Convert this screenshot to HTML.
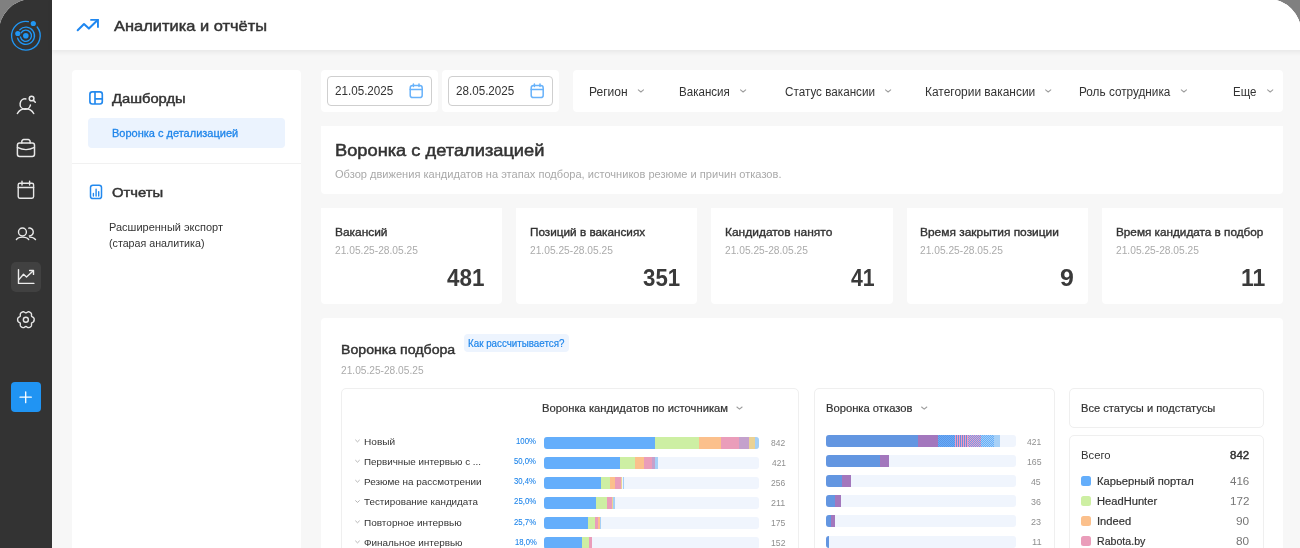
<!DOCTYPE html>
<html lang="ru">
<head>
<meta charset="utf-8">
<title>Аналитика и отчёты</title>
<style>
html,body{margin:0;padding:0;}
body{width:1300px;height:548px;overflow:hidden;background:#808080;font-family:"Liberation Sans",sans-serif;position:relative;}
#clip{position:absolute;left:-1px;top:-1px;width:1302px;height:600px;border-radius:33px 33px 0 0;overflow:hidden;background:#f7f7f7;}
#app{position:absolute;left:1px;top:1px;width:1300px;height:548px;background:#f7f7f7;}
.abs{position:absolute;}
.t{position:absolute;white-space:nowrap;line-height:1;transform-origin:0 0;}
#side{position:absolute;left:0;top:-2px;width:52px;height:560px;background:#333333;}
#hdr{position:absolute;left:52px;top:-2px;width:1260px;height:52px;background:#fff;box-shadow:0 2px 5px rgba(0,0,0,0.07);}
.card{position:absolute;background:#fff;border-radius:4px;}
.box{position:absolute;background:#fff;border:1px solid #efefef;border-radius:5px;box-sizing:border-box;}
.bar{position:absolute;height:12px;border-radius:3px;overflow:hidden;background:#f0f5fd;}
.bar i{position:absolute;top:0;height:12px;display:block;}
.sw{position:absolute;width:10px;height:10px;border-radius:2.5px;}
svg{position:absolute;overflow:visible;}
#txt{position:absolute;left:0;top:0;width:1300px;height:548px;will-change:transform;}
</style>
</head>
<body>
<div id="clip">
<div id="app">
<div id="side"></div>
<div id="hdr"></div>
<!-- sidebar icons -->
<svg id="logo" style="left:0;top:0" width="52" height="60" viewBox="0 0 52 60" fill="none" stroke="#2196f3" stroke-width="1.35" stroke-linecap="round">
  <path d="M37.18 26.97 A14.3 14.3 0 1 1 28.41 21.67"/>
  <path d="M19.82 29.67 A8.6 8.6 0 1 1 17.63 38.12"/>
  <path d="M21.15 32.78 A5.6 5.6 0 1 1 20.42 36.91"/>
  <circle cx="33.3" cy="23.5" r="2.6" fill="#2196f3" stroke="none"/>
  <circle cx="17.8" cy="33.5" r="2.6" fill="#2196f3" stroke="none"/>
  <circle cx="25.8" cy="35.8" r="2.8" fill="#2196f3" stroke="none"/>
</svg>
<svg style="left:0;top:85px" width="52" height="40" viewBox="0 85 52 40" fill="none" stroke="#e8e8e8" stroke-width="1.5" stroke-linecap="round" stroke-linejoin="round">
  <path d="M25.9 98.9 A5.2 5.2 0 1 0 30.4 105.1"/>
  <circle cx="31.6" cy="98.5" r="2.35" stroke-width="1.5"/>
  <path d="M33.4 100.4 L35.3 102.3" stroke-width="1.5"/>
  <path d="M17.4 113.5 A9.4 9.4 0 0 1 33.7 113.5"/>
</svg>
<svg style="left:0;top:128px" width="52" height="40" viewBox="0 128 52 40" fill="none" stroke="#e8e8e8" stroke-width="1.5" stroke-linecap="round" stroke-linejoin="round">
  <rect x="17.4" y="143.1" width="17.1" height="13.3" rx="2.2"/>
  <path d="M21.8 143 V141.5 A1.9 1.9 0 0 1 23.7 139.6 H28.2 A1.9 1.9 0 0 1 30.1 141.5 V143"/>
  <path d="M17.4 147.4 Q26 151.8 34.5 147.4" stroke-width="1.3"/>
</svg>
<svg style="left:0;top:170px" width="52" height="40" viewBox="0 170 52 40" fill="none" stroke="#e8e8e8" stroke-width="1.4" stroke-linecap="round" stroke-linejoin="round">
  <rect x="18.2" y="183.2" width="15.4" height="15" rx="1.6"/>
  <path d="M18.2 187.5 H33.6 M22 181.3 V185 M29.6 181.3 V185"/>
</svg>
<svg style="left:0;top:214px" width="52" height="40" viewBox="0 214 52 40" fill="none" stroke="#e8e8e8" stroke-width="1.4" stroke-linecap="round" stroke-linejoin="round">
  <circle cx="22.45" cy="232" r="3.95"/>
  <path d="M16.4 239.6 C18.4 236.3 26.6 236.3 28.7 239.6"/>
  <path d="M28.7 228.1 A3.95 3.95 0 1 1 29.3 235.95"/>
  <path d="M29.6 237.1 C32 237.1 34.2 237.8 35.5 239.6"/>
</svg>
<div class="abs" style="left:11px;top:262px;width:30px;height:30px;border-radius:5px;background:#414141"></div>
<svg style="left:0;top:256px" width="52" height="40" viewBox="0 256 52 40" fill="none" stroke="#ededed" stroke-width="1.4" stroke-linecap="round" stroke-linejoin="round">
  <path d="M18.5 269.6 V283.4 H33.9"/>
  <path d="M18.9 279.6 L23.5 274.2 L26.5 276.9 L33.3 270.7"/>
  <path d="M29.6 270.5 H33.5 V274.4"/>
</svg>
<svg style="left:0;top:298px" width="52" height="40" viewBox="0 298 52 40" fill="none" stroke="#e6e6e6" stroke-width="1.4" stroke-linecap="round" stroke-linejoin="round">
  <circle cx="25.85" cy="319.7" r="2.5"/>
  <path d="M34.18 319.70 L34.17 319.33 L34.14 318.96 L34.08 318.59 L33.96 318.24 L33.77 317.90 L33.50 317.60 L33.17 317.34 L32.79 317.12 L32.41 316.92 L32.07 316.74 L31.79 316.54 L31.60 316.31 L31.50 316.03 L31.47 315.68 L31.49 315.28 L31.52 314.84 L31.52 314.40 L31.46 313.97 L31.35 313.58 L31.16 313.24 L30.92 312.96 L30.65 312.72 L30.35 312.51 L30.04 312.31 L29.72 312.13 L29.40 311.97 L29.06 311.85 L28.70 311.78 L28.32 311.78 L27.94 311.87 L27.55 312.04 L27.17 312.26 L26.82 312.50 L26.49 312.72 L26.19 312.87 L25.90 312.92 L25.61 312.87 L25.31 312.72 L24.98 312.50 L24.63 312.26 L24.25 312.04 L23.86 311.87 L23.48 311.78 L23.10 311.78 L22.74 311.85 L22.40 311.97 L22.08 312.13 L21.76 312.31 L21.45 312.51 L21.15 312.72 L20.88 312.96 L20.64 313.24 L20.45 313.58 L20.34 313.97 L20.28 314.40 L20.28 314.84 L20.31 315.28 L20.33 315.68 L20.30 316.03 L20.20 316.31 L20.01 316.54 L19.73 316.74 L19.39 316.92 L19.01 317.12 L18.63 317.34 L18.30 317.60 L18.03 317.90 L17.84 318.24 L17.72 318.59 L17.66 318.96 L17.63 319.33 L17.62 319.70 L17.63 320.07 L17.66 320.44 L17.72 320.81 L17.84 321.16 L18.03 321.50 L18.30 321.80 L18.63 322.06 L19.01 322.28 L19.39 322.48 L19.73 322.66 L20.01 322.86 L20.20 323.09 L20.30 323.37 L20.33 323.72 L20.31 324.12 L20.28 324.56 L20.28 325.00 L20.34 325.43 L20.45 325.82 L20.64 326.16 L20.88 326.44 L21.15 326.68 L21.45 326.89 L21.76 327.09 L22.08 327.27 L22.40 327.43 L22.74 327.55 L23.10 327.62 L23.48 327.62 L23.86 327.53 L24.25 327.36 L24.63 327.14 L24.98 326.90 L25.31 326.68 L25.61 326.53 L25.90 326.48 L26.19 326.53 L26.49 326.68 L26.82 326.90 L27.17 327.14 L27.55 327.36 L27.94 327.53 L28.32 327.62 L28.70 327.62 L29.06 327.55 L29.40 327.43 L29.72 327.27 L30.04 327.09 L30.35 326.89 L30.65 326.68 L30.92 326.44 L31.16 326.16 L31.35 325.82 L31.46 325.43 L31.52 325.00 L31.52 324.56 L31.49 324.12 L31.47 323.72 L31.50 323.37 L31.60 323.09 L31.79 322.86 L32.07 322.66 L32.41 322.48 L32.79 322.28 L33.17 322.06 L33.50 321.80 L33.77 321.50 L33.96 321.16 L34.08 320.81 L34.14 320.44 L34.17 320.07 Z"/>
</svg>
<div class="abs" style="left:11px;top:382px;width:29.7px;height:30.2px;border-radius:4px;background:#2094f3"></div>
<svg style="left:0;top:382px" width="52" height="30" viewBox="0 382 52 30" fill="none" stroke="#fff" stroke-width="1.3" stroke-linecap="round">
  <path d="M20 397.2 H31.3 M25.7 391.8 V402.7"/>
</svg>
<!-- header icon -->
<svg style="left:70px;top:10px" width="40" height="30" viewBox="70 10 40 30" fill="none" stroke="#1f87f0" stroke-width="2.05" stroke-linejoin="round">
  <path d="M77.7 30.2 L84 24 L88.9 28.6 L97.4 20.3" stroke-linecap="round"/>
  <path d="M90.3 19.9 H97.95 V27.8" stroke-linejoin="miter" stroke-linecap="butt" stroke-width="1.9"/>
</svg>

<!-- left panel -->
<div class="card" style="left:72px;top:70px;width:229px;height:500px;"></div>
<svg style="left:88px;top:90px" width="18" height="18" viewBox="88 90 18 18" fill="none" stroke="#2389ee" stroke-width="1.65" stroke-linejoin="round">
  <rect x="89.9" y="91.9" width="12.4" height="12.1" rx="2.4"/>
  <path d="M95 91.9 V104 M95 98.8 H102.3"/>
</svg>
<div class="abs" style="left:88px;top:118px;width:197px;height:30px;border-radius:4px;background:#ebf3fe"></div>
<div class="abs" style="left:72px;top:163px;width:229px;height:1px;background:#f1f1f1"></div>
<svg style="left:88px;top:184px" width="18" height="18" viewBox="88 184 18 18" fill="none" stroke="#2389ee" stroke-width="1.4" stroke-linecap="round" stroke-linejoin="round">
  <rect x="90.5" y="185.2" width="11" height="13.4" rx="2.4" stroke-width="1.5"/>
  <path d="M93.4 193.4 V196 M96.1 189.3 V196 M98.7 191.7 V196" stroke-width="1.4"/>
</svg>

<!-- date inputs -->
<div class="card" style="left:321px;top:70px;width:117px;height:42px;"></div>
<div class="card" style="left:442px;top:70px;width:117px;height:42px;"></div>
<div class="abs" style="left:327px;top:76px;width:105px;height:30px;box-sizing:border-box;border:1px solid #cfcfcf;border-radius:4px;"></div>
<div class="abs" style="left:448px;top:76px;width:105px;height:30px;box-sizing:border-box;border:1px solid #cfcfcf;border-radius:4px;"></div>
<svg style="left:405px;top:80px" width="22" height="22" viewBox="405 80 22 22" fill="none" stroke="#68b2fa" stroke-width="1.5" stroke-linecap="round" stroke-linejoin="round">
  <rect x="410.2" y="85.6" width="12" height="12" rx="2.4"/>
  <path d="M410.2 89.4 H422.2 M413.4 84 V86.6 M419 84 V86.6"/>
</svg>
<svg style="left:526px;top:80px" width="22" height="22" viewBox="405 80 22 22" fill="none" stroke="#68b2fa" stroke-width="1.5" stroke-linecap="round" stroke-linejoin="round">
  <rect x="410.2" y="85.6" width="12" height="12" rx="2.4"/>
  <path d="M410.2 89.4 H422.2 M413.4 84 V86.6 M419 84 V86.6"/>
</svg>
<!-- filter bar -->
<div class="card" style="left:573px;top:70px;width:710px;height:42px;"></div>

<!-- title card -->
<div class="card" style="left:321px;top:126px;width:962px;height:68px;border-radius:0 0 4px 4px;"></div>
<!-- stat cards -->
<div class="card" style="left:321px;top:208px;width:181.2px;height:96px;border-radius:0 0 4px 4px;"></div>
<div class="card" style="left:516.2px;top:208px;width:181.2px;height:96px;border-radius:0 0 4px 4px;"></div>
<div class="card" style="left:711.4px;top:208px;width:181.2px;height:96px;border-radius:0 0 4px 4px;"></div>
<div class="card" style="left:906.6px;top:208px;width:181.2px;height:96px;border-radius:0 0 4px 4px;"></div>
<div class="card" style="left:1101.8px;top:208px;width:181.2px;height:96px;border-radius:0 0 4px 4px;"></div>
<!-- funnel section -->
<div class="card" style="left:321px;top:318px;width:962px;height:260px;"></div>
<div class="abs" style="left:464px;top:334px;width:105px;height:17.8px;border-radius:4px;background:#edf4fe"></div>
<div class="box" style="left:341px;top:388px;width:458px;height:200px;"></div>
<div class="box" style="left:814px;top:388px;width:241px;height:200px;"></div>
<div class="box" style="left:1069px;top:388px;width:195px;height:40px;"></div>
<div class="box" style="left:1069px;top:435px;width:195px;height:160px;"></div>
<svg style="left:0;top:0" width="1300" height="548" viewBox="0 0 1300 548" fill="none" stroke="#9c9c9c" stroke-width="1.05" stroke-linecap="round" stroke-linejoin="round">
  <path d="M638.30 89.80 L640.90 92.00 L643.50 89.80"/>
  <path d="M740.50 89.80 L743.10 92.00 L745.70 89.80"/>
  <path d="M885.50 89.80 L888.10 92.00 L890.70 89.80"/>
  <path d="M1045.60 89.80 L1048.20 92.00 L1050.80 89.80"/>
  <path d="M1181.30 89.80 L1183.90 92.00 L1186.50 89.80"/>
  <path d="M1267.60 89.80 L1270.20 92.00 L1272.80 89.80"/>
  <path d="M736.90 407.00 L739.50 409.20 L742.10 407.00"/>
  <path d="M921.60 407.00 L924.20 409.20 L926.80 407.00"/>
</svg>
<div class="bar" style="left:544px;top:436.7px;width:215.4px"><i style="left:0.0px;width:111.0px;background:#64aefb"></i><i style="left:111.0px;width:43.8px;background:#cdefa3"></i><i style="left:154.8px;width:22.2px;background:#fbc08c"></i><i style="left:177.0px;width:18.4px;background:#ea9dba"></i><i style="left:195.4px;width:9.4px;background:#c4a1cc"></i><i style="left:204.8px;width:6.1px;background:#ead295"></i><i style="left:210.9px;width:4.5px;background:#a6d0f6"></i></div>
<div class="bar" style="left:544px;top:456.7px;width:215.4px"><i style="left:0.0px;width:76.0px;background:#64aefb"></i><i style="left:76.0px;width:14.7px;background:#cdefa3"></i><i style="left:90.7px;width:9.3px;background:#fbc08c"></i><i style="left:100.0px;width:8.0px;background:#ea9dba"></i><i style="left:108.0px;width:3.0px;background:#c4a1cc"></i><i style="left:111.0px;width:2.7px;background:#a6d0f6"></i></div>
<div class="bar" style="left:544px;top:476.7px;width:215.4px"><i style="left:0.0px;width:57.0px;background:#64aefb"></i><i style="left:57.0px;width:9.0px;background:#cdefa3"></i><i style="left:66.0px;width:5.0px;background:#fbc08c"></i><i style="left:71.0px;width:5.6px;background:#ea9dba"></i><i style="left:76.6px;width:1.9px;background:#ead295"></i><i style="left:78.5px;width:1.5px;background:#a6d0f6"></i></div>
<div class="bar" style="left:544px;top:496.7px;width:215.4px"><i style="left:0.0px;width:52.0px;background:#64aefb"></i><i style="left:52.0px;width:10.7px;background:#cdefa3"></i><i style="left:62.7px;width:4.9px;background:#ea9dba"></i><i style="left:67.6px;width:1.4px;background:#ead295"></i><i style="left:69.0px;width:1.8px;background:#a6d0f6"></i></div>
<div class="bar" style="left:544px;top:516.7px;width:215.4px"><i style="left:0.0px;width:44.0px;background:#64aefb"></i><i style="left:44.0px;width:7.0px;background:#cdefa3"></i><i style="left:51.0px;width:2.5px;background:#ea9dba"></i><i style="left:53.5px;width:2.0px;background:#fbc08c"></i><i style="left:55.5px;width:1.1px;background:#a6d0f6"></i></div>
<div class="bar" style="left:544px;top:536.7px;width:215.4px"><i style="left:0.0px;width:38.0px;background:#64aefb"></i><i style="left:38.0px;width:7.0px;background:#cdefa3"></i><i style="left:45.0px;width:3.0px;background:#ea9dba"></i></div>
<div class="bar" style="left:825.9px;top:435.2px;width:190px"><i style="left:0.0px;width:92.2px;background:#6396e1"></i><i style="left:92.2px;width:19.7px;background:#a377bd"></i><i style="left:111.9px;width:17.1px;background:repeating-conic-gradient(#5f93e3 0 25%,#64aefb 0 50%) 0 0/2px 2px"></i><i style="left:129.0px;width:13.1px;background:repeating-linear-gradient(90deg,#f49ac1 0 1px,#6a8fdc 1px 2px)"></i><i style="left:142.1px;width:13.1px;background:repeating-conic-gradient(#f49ac1 0 25%,#6aa0ee 0 50%) 0 0/2px 2px"></i><i style="left:155.2px;width:12.9px;background:repeating-conic-gradient(#64aefb 0 25%,#a6d0f6 0 50%) 0 0/2px 2px"></i><i style="left:168.1px;width:6.0px;background:#a8d1f7"></i></div>
<div class="bar" style="left:825.9px;top:455.2px;width:190px"><i style="left:0.0px;width:54.1px;background:#6396e1"></i><i style="left:54.1px;width:9.0px;background:#a377bd"></i></div>
<div class="bar" style="left:825.9px;top:475.3px;width:190px"><i style="left:0.0px;width:16.1px;background:#6396e1"></i><i style="left:16.1px;width:9.0px;background:#a377bd"></i></div>
<div class="bar" style="left:825.9px;top:495.4px;width:190px"><i style="left:0.0px;width:9.1px;background:#6396e1"></i><i style="left:9.1px;width:6.0px;background:#a377bd"></i></div>
<div class="bar" style="left:825.9px;top:515.4px;width:190px"><i style="left:0.0px;width:5.1px;background:#6396e1"></i><i style="left:5.1px;width:3.8px;background:#a377bd"></i></div>
<div class="bar" style="left:825.9px;top:535.5px;width:190px"><i style="left:0.0px;width:3.1px;background:#6396e1"></i></div>
<svg style="left:0;top:0" width="1300" height="548" viewBox="0 0 1300 548" fill="none" stroke="#adadad" stroke-width="0.9" stroke-linecap="round" stroke-linejoin="round"><path d="M355.6 440.05 L357.5 441.85 L359.4 440.05"/><path d="M355.6 460.35 L357.5 462.15 L359.4 460.35"/><path d="M355.6 480.35 L357.5 482.15 L359.4 480.35"/><path d="M355.6 500.65 L357.5 502.45 L359.4 500.65"/><path d="M355.6 520.95 L357.5 522.75 L359.4 520.95"/><path d="M355.6 541.05 L357.5 542.85 L359.4 541.05"/></svg>
<div class="sw" style="left:1081px;top:476.1px;background:#64aefb"></div>
<div class="sw" style="left:1081px;top:496.1px;background:#cdefa3"></div>
<div class="sw" style="left:1081px;top:516.1px;background:#fbc08c"></div>
<div class="sw" style="left:1081px;top:536.1px;background:#ea9dba"></div>
<!-- text -->
<div id="txt">
<span class="t" style="left:114.32px;top:19px;font-size:14.5px;color:#333;transform:scaleX(1.1332);-webkit-text-stroke:0.45px #333;">Аналитика и отчёты</span>
<span class="t" style="left:112.15px;top:92px;font-size:13px;color:#333;transform:scaleX(1.1329);-webkit-text-stroke:0.45px #333;">Дашборды</span>
<span class="t" style="left:111.97px;top:128px;font-size:11px;color:#1f85ea;transform:scaleX(0.9996);-webkit-text-stroke:0.3px #1f85ea;">Воронка с детализацией</span>
<span class="t" style="left:111.86px;top:186px;font-size:13px;color:#333;transform:scaleX(1.1402);-webkit-text-stroke:0.45px #333;">Отчеты</span>
<span class="t" style="left:108.82px;top:222px;font-size:11px;color:#333;transform:scaleX(0.9994);">Расширенный экспорт</span>
<span class="t" style="left:108.66px;top:238px;font-size:11px;color:#333;transform:scaleX(0.9708);">(старая аналитика)</span>
<span class="t" style="left:334.72px;top:85px;font-size:12px;color:#333;transform:scaleX(0.9701);">21.05.2025</span>
<span class="t" style="left:455.72px;top:85px;font-size:12px;color:#333;transform:scaleX(0.9701);">28.05.2025</span>
<span class="t" style="left:588.84px;top:86px;font-size:12px;color:#333;transform:scaleX(1.0037);">Регион</span>
<span class="t" style="left:678.92px;top:86px;font-size:12px;color:#333;transform:scaleX(0.9640);">Вакансия</span>
<span class="t" style="left:784.82px;top:86px;font-size:12px;color:#333;transform:scaleX(0.9738);">Статус вакансии</span>
<span class="t" style="left:924.79px;top:86px;font-size:12px;color:#333;transform:scaleX(0.9955);">Категории вакансии</span>
<span class="t" style="left:1078.71px;top:86px;font-size:12px;color:#333;transform:scaleX(0.9809);">Роль сотрудника</span>
<span class="t" style="left:1232.88px;top:86px;font-size:12px;color:#333;transform:scaleX(0.9581);">Еще</span>
<span class="t" style="left:334.59px;top:142px;font-size:16.5px;color:#333;transform:scaleX(1.1064);-webkit-text-stroke:0.5px #333;">Воронка с детализацией</span>
<span class="t" style="left:334.70px;top:169px;font-size:10.5px;color:#a9a9a9;transform:scaleX(1.0538);">Обзор движения кандидатов на этапах подбора, источников резюме и причин отказов.</span>
<span class="t" style="left:334.92px;top:227px;font-size:11px;color:#333;transform:scaleX(1.0831);-webkit-text-stroke:0.35px #333;">Вакансий</span>
<span class="t" style="left:334.79px;top:246px;font-size:10px;color:#ababab;transform:scaleX(1.0216);">21.05.25-28.05.25</span>
<span class="t" style="left:447.36px;top:266px;font-size:24px;color:#3a3a3a;transform:scaleX(0.9346);font-weight:700;">481</span>
<span class="t" style="left:530.04px;top:227px;font-size:11px;color:#333;transform:scaleX(1.0676);-webkit-text-stroke:0.35px #333;">Позиций в вакансиях</span>
<span class="t" style="left:529.89px;top:246px;font-size:10px;color:#ababab;transform:scaleX(1.0216);">21.05.25-28.05.25</span>
<span class="t" style="left:642.55px;top:266px;font-size:24px;color:#3a3a3a;transform:scaleX(0.9272);font-weight:700;">351</span>
<span class="t" style="left:725.22px;top:227px;font-size:11px;color:#333;transform:scaleX(1.0877);-webkit-text-stroke:0.35px #333;">Кандидатов нанято</span>
<span class="t" style="left:725.09px;top:246px;font-size:10px;color:#ababab;transform:scaleX(1.0216);">21.05.25-28.05.25</span>
<span class="t" style="left:851.38px;top:266px;font-size:24px;color:#3a3a3a;transform:scaleX(0.8869);font-weight:700;">41</span>
<span class="t" style="left:920.42px;top:227px;font-size:11px;color:#333;transform:scaleX(1.0848);-webkit-text-stroke:0.35px #333;">Время закрытия позиции</span>
<span class="t" style="left:920.29px;top:246px;font-size:10px;color:#ababab;transform:scaleX(1.0216);">21.05.25-28.05.25</span>
<span class="t" style="left:1060.05px;top:266px;font-size:24px;color:#3a3a3a;transform:scaleX(1.0374);font-weight:700;">9</span>
<span class="t" style="left:1115.84px;top:227px;font-size:11px;color:#333;transform:scaleX(1.0670);-webkit-text-stroke:0.35px #333;">Время кандидата в подбор</span>
<span class="t" style="left:1115.69px;top:246px;font-size:10px;color:#ababab;transform:scaleX(1.0216);">21.05.25-28.05.25</span>
<span class="t" style="left:1241.42px;top:266px;font-size:24px;color:#3a3a3a;transform:scaleX(0.9569);font-weight:700;">11</span>
<span class="t" style="left:340.69px;top:343px;font-size:13.25px;color:#333;transform:scaleX(1.0667);-webkit-text-stroke:0.45px #333;">Воронка подбора</span>
<span class="t" style="left:467.82px;top:339px;font-size:10px;color:#1f85ea;transform:scaleX(0.9786);-webkit-text-stroke:0.2px #1f85ea;">Как рассчитывается?</span>
<span class="t" style="left:340.89px;top:366px;font-size:10px;color:#ababab;transform:scaleX(1.0166);">21.05.25-28.05.25</span>
<span class="t" style="left:542.30px;top:403px;font-size:11px;color:#333;transform:scaleX(1.0207);-webkit-text-stroke:0.2px #333;">Воронка кандидатов по источникам</span>
<span class="t" style="left:363.69px;top:437px;font-size:9.5px;color:#333;transform:scaleX(1.0604);">Новый</span>
<span class="t" style="left:516.36px;top:437px;font-size:8.5px;color:#1f85ea;transform:scaleX(0.9177);-webkit-text-stroke:0.1px #1f85ea;">100%</span>
<span class="t" style="left:771.36px;top:439px;font-size:8.75px;color:#8f8f8f;transform:scaleX(0.9678);">842</span>
<span class="t" style="left:363.71px;top:457px;font-size:9.5px;color:#333;transform:scaleX(1.0338);">Первичные интервью с ...</span>
<span class="t" style="left:514.34px;top:457px;font-size:8.5px;color:#1f85ea;transform:scaleX(0.9118);-webkit-text-stroke:0.1px #1f85ea;">50,0%</span>
<span class="t" style="left:771.53px;top:459px;font-size:8.75px;color:#8f8f8f;transform:scaleX(0.9558);">421</span>
<span class="t" style="left:363.71px;top:477px;font-size:9.5px;color:#333;transform:scaleX(1.0457);">Резюме на рассмотрении</span>
<span class="t" style="left:514.38px;top:477px;font-size:8.5px;color:#1f85ea;transform:scaleX(0.9101);-webkit-text-stroke:0.1px #1f85ea;">30,4%</span>
<span class="t" style="left:771.28px;top:479px;font-size:8.75px;color:#8f8f8f;transform:scaleX(0.9709);">256</span>
<span class="t" style="left:364.30px;top:497px;font-size:9.5px;color:#333;transform:scaleX(1.0349);">Тестирование кандидата</span>
<span class="t" style="left:513.96px;top:497px;font-size:8.5px;color:#1f85ea;transform:scaleX(0.9279);-webkit-text-stroke:0.1px #1f85ea;">25,0%</span>
<span class="t" style="left:771.25px;top:499px;font-size:8.75px;color:#8f8f8f;transform:scaleX(1.0223);">211</span>
<span class="t" style="left:363.70px;top:518px;font-size:9.5px;color:#333;transform:scaleX(1.0540);">Повторное интервью</span>
<span class="t" style="left:514.26px;top:518px;font-size:8.5px;color:#1f85ea;transform:scaleX(0.9151);-webkit-text-stroke:0.1px #1f85ea;">25,7%</span>
<span class="t" style="left:771.05px;top:519px;font-size:8.75px;color:#8f8f8f;transform:scaleX(0.9866);">175</span>
<span class="t" style="left:363.96px;top:538px;font-size:9.5px;color:#333;transform:scaleX(1.0429);">Финальное интервью</span>
<span class="t" style="left:514.58px;top:538px;font-size:8.5px;color:#1f85ea;transform:scaleX(0.9019);-webkit-text-stroke:0.1px #1f85ea;">18,0%</span>
<span class="t" style="left:771.05px;top:539px;font-size:8.75px;color:#8f8f8f;transform:scaleX(0.9897);">152</span>
<span class="t" style="left:826.10px;top:403px;font-size:11px;color:#333;transform:scaleX(1.0191);-webkit-text-stroke:0.2px #333;">Воронка отказов</span>
<span class="t" style="left:1027.03px;top:438px;font-size:8.75px;color:#8f8f8f;transform:scaleX(0.9700);">421</span>
<span class="t" style="left:1026.54px;top:458px;font-size:8.75px;color:#8f8f8f;transform:scaleX(1.0013);">165</span>
<span class="t" style="left:1031.42px;top:478px;font-size:8.75px;color:#8f8f8f;transform:scaleX(1.0003);">45</span>
<span class="t" style="left:1031.29px;top:498px;font-size:8.75px;color:#8f8f8f;transform:scaleX(1.0147);">36</span>
<span class="t" style="left:1031.15px;top:518px;font-size:8.75px;color:#8f8f8f;transform:scaleX(1.0296);">23</span>
<span class="t" style="left:1031.50px;top:538px;font-size:8.75px;color:#8f8f8f;transform:scaleX(1.0719);">11</span>
<span class="t" style="left:1080.61px;top:403px;font-size:11px;color:#333;transform:scaleX(1.0095);-webkit-text-stroke:0.2px #333;">Все статусы и подстатусы</span>
<span class="t" style="left:1080.50px;top:450px;font-size:11px;color:#333;transform:scaleX(1.0251);">Всего</span>
<span class="t" style="left:1229.87px;top:450px;font-size:11px;color:#333;transform:scaleX(1.0428);-webkit-text-stroke:0.45px #333;">842</span>
<span class="t" style="left:1096.81px;top:476px;font-size:11.25px;color:#333;transform:scaleX(0.9939);-webkit-text-stroke:0.2px #333;">Карьерный портал</span>
<span class="t" style="left:1229.87px;top:476px;font-size:11.25px;color:#777;transform:scaleX(1.0286);">416</span>
<span class="t" style="left:1096.81px;top:496px;font-size:11.25px;color:#333;transform:scaleX(0.9914);-webkit-text-stroke:0.2px #333;">HeadHunter</span>
<span class="t" style="left:1229.83px;top:496px;font-size:11.25px;color:#777;transform:scaleX(1.0341);">172</span>
<span class="t" style="left:1096.70px;top:516px;font-size:11.25px;color:#333;transform:scaleX(0.9906);-webkit-text-stroke:0.2px #333;">Indeed</span>
<span class="t" style="left:1235.97px;top:516px;font-size:11.25px;color:#777;transform:scaleX(1.0517);">90</span>
<span class="t" style="left:1096.85px;top:536px;font-size:11.25px;color:#333;transform:scaleX(0.9428);-webkit-text-stroke:0.2px #333;">Rabota.by</span>
<span class="t" style="left:1236.03px;top:536px;font-size:11.25px;color:#777;transform:scaleX(1.0466);">80</span>
</div>
</div>
</div>
</body>
</html>
